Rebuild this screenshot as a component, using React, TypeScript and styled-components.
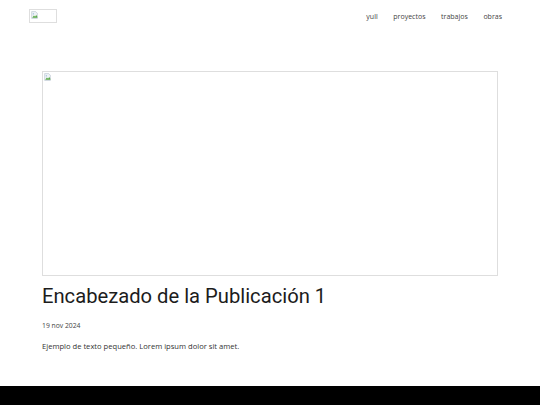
import React from "react";
import styled, { createGlobalStyle } from "styled-components";

const Global = createGlobalStyle`
  html, body { margin: 0; padding: 0; background: #fff; }
  body { font-family: "Open Sans", "Liberation Sans", sans-serif; color: #222; }
`;

const Page = styled.div`
  width: 540px;
  height: 405px;
  display: flex;
  flex-direction: column;
  overflow: hidden;
`;

const Header = styled.header`
  display: flex;
  align-items: center;
  justify-content: space-between;
  padding: 9px 38px 0 29px;
  height: 14px;
`;

const BrokenFrame = styled.div<{ $w: number; $h: number }>`
  box-sizing: border-box;
  width: ${(p) => p.$w}px;
  height: ${(p) => p.$h}px;
  border: 1px solid #dedede;
  padding: 1px 0 0 1px;
  display: flex;
  align-items: flex-start;
`;

const Nav = styled.nav`
  display: flex;
  gap: 15.6px;
  font-size: 7px;
  color: #444;
  margin-top: 1px;
`;

const NavLink = styled.span`
  line-height: 10px;
`;

const Main = styled.main`
  flex: 1;
  padding: 48px 42px 0 42px;
  display: flex;
  flex-direction: column;
`;

const Title = styled.h1`
  margin: 6px 0 0 0;
  font-family: Roboto, "Liberation Sans", sans-serif;
  font-weight: 400;
  font-size: 20.2px;
  line-height: 28px;
  color: #1c1c1c;
`;

const DateLine = styled.div`
  margin-top: 11px;
  font-size: 6.8px;
  line-height: 9px;
  color: #444;
`;

const Body = styled.p`
  margin: 11px 0 0 0;
  font-size: 7.6px;
  line-height: 11px;
  color: #333;
`;

const Footer = styled.footer`
  height: 19px;
  background: #000;
`;

function BrokenIcon() {
  return (
    <svg width="7" height="8" viewBox="0 0 12 14">
      <path d="M1 1h7l3 3v9H1z" fill="#eef2f6" stroke="#b3bfcc" strokeWidth="1" />
      <path d="M2 12l3-4 2 2 2-3 2 3v2H2z" fill="#5aa848" />
      <circle cx="4" cy="5" r="1.2" fill="#8db3d8" />
    </svg>
  );
}

export default function App() {
  return (
    <Page>
      <Global />
      <Header>
        <BrokenFrame $w={28} $h={14}>
          <BrokenIcon />
        </BrokenFrame>
        <Nav>
          <NavLink>yull</NavLink>
          <NavLink>proyectos</NavLink>
          <NavLink>trabajos</NavLink>
          <NavLink>obras</NavLink>
        </Nav>
      </Header>
      <Main>
        <BrokenFrame $w={456} $h={205}>
          <BrokenIcon />
        </BrokenFrame>
        <Title>Encabezado de la Publicación 1</Title>
        <DateLine>19 nov 2024</DateLine>
        <Body>Ejemplo de texto pequeño. Lorem ipsum dolor sit amet.</Body>
      </Main>
      <Footer />
    </Page>
  );
}
